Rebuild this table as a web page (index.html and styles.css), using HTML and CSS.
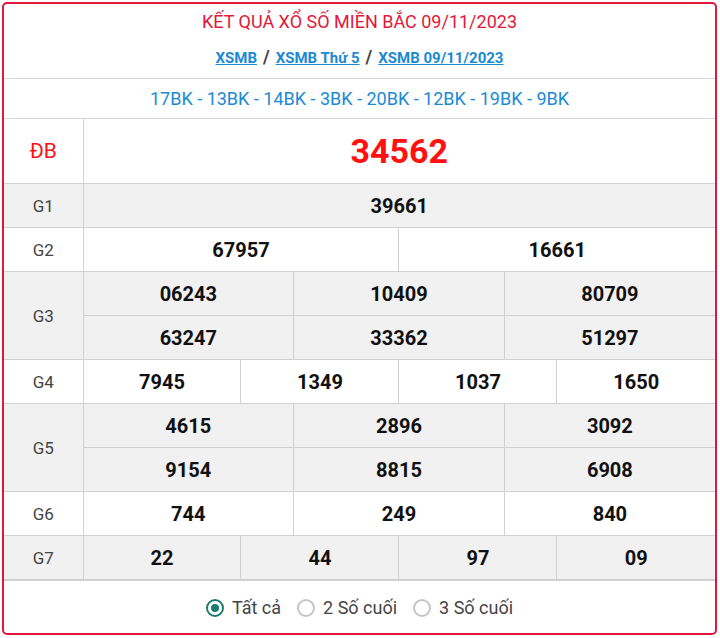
FILE: index.html
```html
<!DOCTYPE html>
<html lang="vi">
<head>
<meta charset="utf-8">
<title>KQXS Miền Bắc</title>
<link rel="stylesheet" href="styles.css">
</head>
<body>
<div class="box">
  <div class="head">
    <h1 class="title">KẾT QUẢ XỔ SỐ MIỀN BẮC 09/11/2023</h1>
    <div class="crumbs"><a href="#">XSMB</a><span class="sep">/</span><a href="#">XSMB Thứ 5</a><span class="sep">/</span><a href="#">XSMB 09/11/2023</a></div>
  </div>
  <div class="codes">17BK - 13BK - 14BK - 3BK - 20BK - 12BK - 19BK - 9BK</div>
  <table class="res">
    <colgroup>
      <col class="c-label">
      <col><col><col><col><col><col><col><col><col><col><col><col>
    </colgroup>
    <tr class="db">
      <td class="lbl">ĐB</td>
      <td colspan="12" class="num big">34562</td>
    </tr>
    <tr class="alt">
      <td class="lbl">G1</td>
      <td colspan="12" class="num">39661</td>
    </tr>
    <tr>
      <td class="lbl">G2</td>
      <td colspan="6" class="num">67957</td>
      <td colspan="6" class="num">16661</td>
    </tr>
    <tr class="alt">
      <td class="lbl" rowspan="2">G3</td>
      <td colspan="4" class="num">06243</td>
      <td colspan="4" class="num">10409</td>
      <td colspan="4" class="num">80709</td>
    </tr>
    <tr class="alt">
      <td colspan="4" class="num">63247</td>
      <td colspan="4" class="num">33362</td>
      <td colspan="4" class="num">51297</td>
    </tr>
    <tr>
      <td class="lbl">G4</td>
      <td colspan="3" class="num">7945</td>
      <td colspan="3" class="num">1349</td>
      <td colspan="3" class="num">1037</td>
      <td colspan="3" class="num">1650</td>
    </tr>
    <tr class="alt">
      <td class="lbl" rowspan="2">G5</td>
      <td colspan="4" class="num">4615</td>
      <td colspan="4" class="num">2896</td>
      <td colspan="4" class="num">3092</td>
    </tr>
    <tr class="alt">
      <td colspan="4" class="num">9154</td>
      <td colspan="4" class="num">8815</td>
      <td colspan="4" class="num">6908</td>
    </tr>
    <tr>
      <td class="lbl">G6</td>
      <td colspan="4" class="num">744</td>
      <td colspan="4" class="num">249</td>
      <td colspan="4" class="num">840</td>
    </tr>
    <tr class="alt">
      <td class="lbl">G7</td>
      <td colspan="3" class="num">22</td>
      <td colspan="3" class="num">44</td>
      <td colspan="3" class="num">97</td>
      <td colspan="3" class="num">09</td>
    </tr>
  </table>
  <div class="opts">
    <label class="opt"><span class="radio on"></span>Tất cả</label>
    <label class="opt"><span class="radio"></span>2 Số cuối</label>
    <label class="opt"><span class="radio"></span>3 Số cuối</label>
  </div>
</div>
</body>
</html>
```

FILE: styles.css
```css
html, body {
  margin: 0;
  padding: 0;
  background: #ffffff;
}
body {
  padding: 2px 3px 0 2px;
  font-family: Roboto, "Liberation Sans", Arial, sans-serif;
  color: #222;
}
.box {
  border: 2px solid #e3173a;
  border-radius: 5px;
  height: 633px;
  box-sizing: border-box;
  overflow: hidden;
  background: #fff;
}
.head {
  padding: 6px 0 0;
  height: 68px;
  border-bottom: 1px solid #d6d6d6;
  text-align: center;
}
.title {
  margin: 0;
  font-size: 18px;
  font-weight: 400;
  line-height: 24px;
  color: #e3173a;
}
.crumbs {
  margin-top: 11px;
  line-height: 24px;
  font-size: 15px;
  font-weight: 700;
}
.crumbs a {
  color: #1b8ad3;
  text-decoration: underline;
}
.sep {
  color: #444;
  font-size: 18px;
  padding: 0 6px;
  font-weight: 700;
}
.codes {
  height: 39px;
  line-height: 39px;
  text-align: center;
  font-size: 18px;
  color: #1b8ad3;
  border-bottom: 1px solid #d6d6d6;
}
.res {
  width: 100%;
  border-collapse: collapse;
  table-layout: fixed;
}
.c-label {
  width: 79px;
}
.res td {
  border: 1px solid #d0d0d0;
  height: 43px;
  padding: 0;
  text-align: center;
  vertical-align: middle;
}
.res tr:first-child td {
  border-top: none;
}
.res td:first-child.lbl {
  border-left: none;
}
.res tr td:last-child {
  border-right: none;
}
.res tr.db td {
  height: 64px;
}
.alt td {
  background: #f1f1f1;
}
.lbl {
  font-size: 17px;
  color: #444;
}
.db .lbl {
  color: #ff1111;
  font-size: 21px;
}
.num {
  font-size: 20px;
  font-weight: 700;
  color: #111;
}
.num.big {
  font-size: 34px;
  color: #ff1111;
}
.opts {
  display: flex;
  justify-content: center;
  align-items: center;
  gap: 16px;
  height: 53px;
  border-top: 1px solid #d0d0d0;
  font-size: 18px;
  color: #444;
}
.opt {
  display: flex;
  align-items: center;
  gap: 8px;
}
.radio {
  width: 14px;
  height: 14px;
  border: 2px solid #c4c4c4;
  border-radius: 50%;
  box-sizing: content-box;
  display: inline-block;
  position: relative;
}
.radio.on {
  border-color: #1a7d72;
}
.radio.on::after {
  content: "";
  position: absolute;
  left: 3px;
  top: 3px;
  width: 8px;
  height: 8px;
  border-radius: 50%;
  background: #1a7d72;
}
```
